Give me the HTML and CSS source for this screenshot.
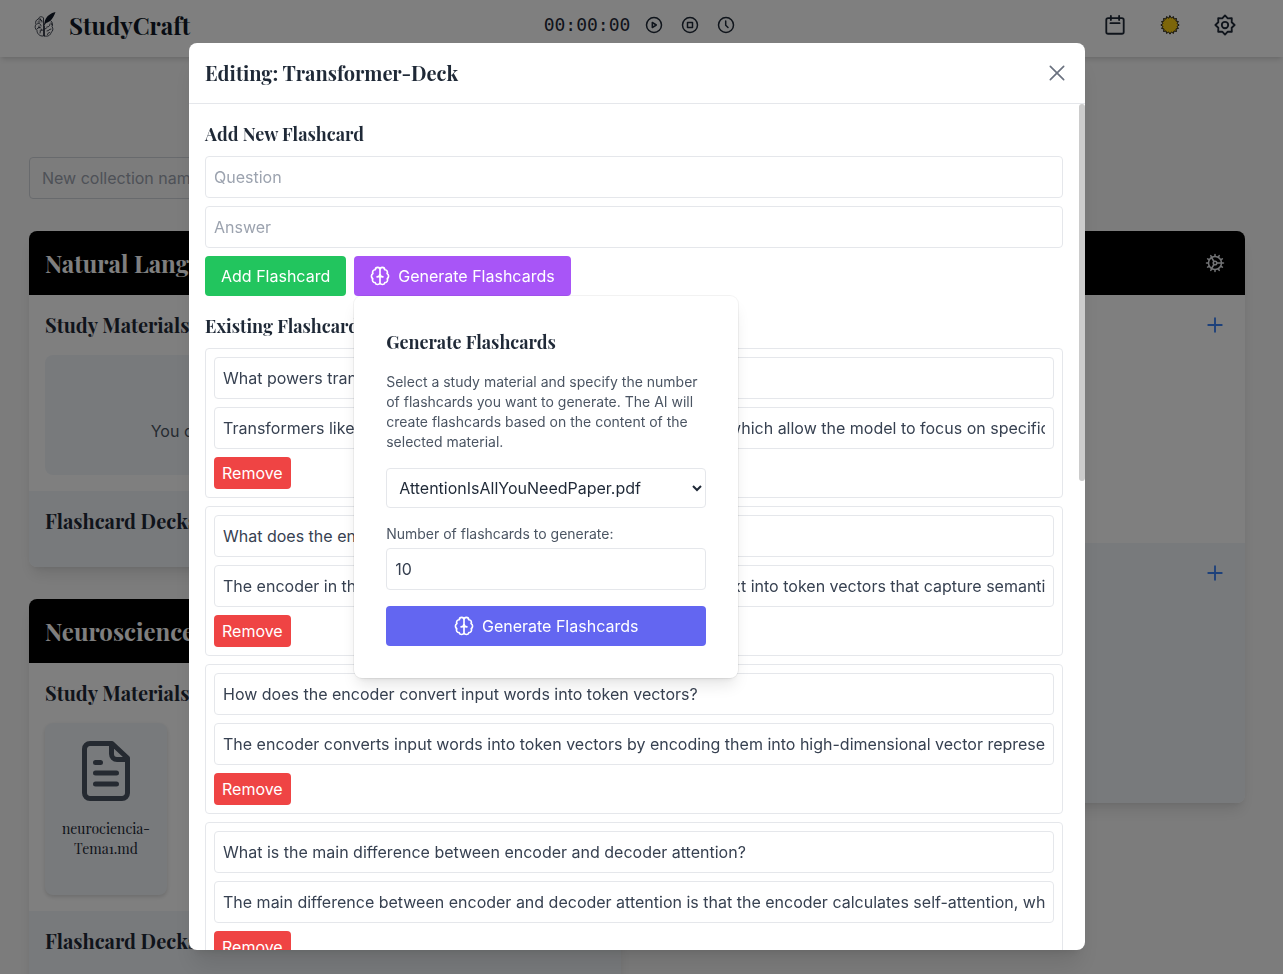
FILE: index.html
```
<!DOCTYPE html>
<html lang="en">
<head>
<meta charset="utf-8">
<title>StudyCraft</title>
<link rel="stylesheet" href="styles.css">
</head>
<body>
<svg class="sprite" aria-hidden="true">
  <symbol id="plus" viewBox="0 0 24 24"><path d="M12 3v18M3 12h18"/></symbol>
  <symbol id="brain" viewBox="0 0 24 24"><path d="M12 4.500A2.800 2.800 0 0 0 6.400 4.500 3 3 0 0 0 3.500 9a3.800 3.800 0 0 0-.2 6.300 3.200 3.200 0 0 0 2.900 4.700A3 3 0 0 0 12 20zM12 4.500A2.800 2.800 0 0 1 17.600 4.500 3 3 0 0 1 20.500 9a3.800 3.800 0 0 1 .2 6.300 3.200 3.200 0 0 1-2.900 4.700A3 3 0 0 1 12 20zM8.500 13a3.800 3.800 0 0 0 3.500-3.800 3.800 3.800 0 0 0 3.500 3.800"/></symbol>
</svg>

<div class="page">
  <header class="topbar">
    <a class="brand" href="#">
      <svg class="brand-logo" viewBox="0 0 22 26" aria-hidden="true">
        <g fill="none" stroke="currentColor" stroke-width=".8" stroke-linecap="round">
          <path d="M9 5.500C7.500 4 5 4.500 4.500 7 2 7.500 1 10 2 12.500 .500 14 1 17 3 18.500 3 21.500 5.500 24.500 9.500 24V6"/>
          <path d="M10.500 24c3 .800 6-.500 6.500-3.500 2-1 2.500-4 1-6 1-2 .500-4-1-5.500"/>
          <path d="M10.500 14v10M5 8c2-1 3 0 3 2M3 12c2-1.500 4 0 4 2M3 17c1-2 3-2 4-1M6 21c0-2 1-3 3-3M13 15c2 0 3-1 3-3M13 19c2 0 2-2 4-2M13.500 22.500c0-1 1-2 2-2M6 6.500l1 2M5 14v2M17 11l1 2M4 10h2M6 18.500l1.500-1M11 17l1.500-1"/>
        </g>
        <path fill="currentColor" d="M21.500 0C17 1 12.500 4 11 8.500L9.500 14.500 12 11c4-1 7-4 9.500-11z"/>
      </svg>
      <span>StudyCraft</span>
    </a>
    <div class="timer">
      <span class="timer-value">00:00:00</span>
      <button class="icon-btn" type="button" aria-label="Start"><svg class="icon icon-timer" viewBox="0 0 18 18"><circle cx="9" cy="9" r="7.500"/><path d="M7.300 6.500v5L11.300 9z"/></svg></button>
      <button class="icon-btn" type="button" aria-label="Stop"><svg class="icon icon-timer" viewBox="0 0 18 18"><circle cx="9" cy="9" r="7.500"/><rect x="6.500" y="6.500" width="5" height="5"/></svg></button>
      <button class="icon-btn" type="button" aria-label="History"><svg class="icon icon-timer" viewBox="0 0 18 18"><circle cx="9" cy="9" r="7.500"/><path d="M8.700 5v4.300l2.300 2.200"/></svg></button>
    </div>
    <nav class="tools">
      <button class="icon-btn" type="button" aria-label="Calendar"><svg class="icon icon-tool" viewBox="0 0 24 24"><rect x="2.500" y="4.500" width="19" height="17" rx="2"/><path d="M7.500 2v4.500M16.500 2v4.500M7 10h10"/></svg></button>
      <button class="icon-btn" type="button" aria-label="Theme"><svg class="icon icon-tool icon-sun" viewBox="0 0 24 24"><path d="M12 2L13.500 4.400 15.800 2.800 16.300 5.500 19.100 4.900 18.500 7.700 21.200 8.200 19.700 10.500 22 12 19.700 13.500 21.200 15.800 18.500 16.300 19.100 19.100 16.300 18.500 15.800 21.200 13.500 19.600 12 22 10.500 19.600 8.200 21.200 7.700 18.500 4.900 19.100 5.500 16.300 2.800 15.800 4.300 13.500 2 12 4.300 10.500 2.800 8.200 5.500 7.700 4.900 4.900 7.700 5.500 8.200 2.800 10.500 4.400z"/></svg></button>
      <button class="icon-btn" type="button" aria-label="Settings"><svg class="icon icon-tool" viewBox="0 0 24 24"><path d="M12 1.500l3 3.200 4.400-.1-.1 4.400 3.200 3-3.200 3 .1 4.400-4.400-.1-3 3.200-3-3.200-4.400.1.1-4.400L1.500 12l3.200-3-.1-4.400 4.400.1z"/><circle cx="12" cy="12" r="3.500"/></svg></button>
    </nav>
  </header>

  <main class="content">
    <input class="collection-input" type="text" placeholder="New collection name" aria-label="New collection name">
    <div class="columns">
      <div class="column">
        <section class="collection">
          <div class="collection-head"><h2>Natural Language</h2></div>
          <div class="panel">
            <h3>Study Materials</h3>
            <div class="empty"><p>You can upload new materials with the button.</p></div>
          </div>
          <div class="panel panel-decks"><h3>Flashcard Decks</h3></div>
        </section>
        <section class="collection">
          <div class="collection-head"><h2>Neuroscience</h2></div>
          <div class="panel panel-files">
            <h3>Study Materials</h3>
            <div class="file">
              <svg class="file-icon" viewBox="0 0 48 60" aria-hidden="true"><path d="M30 2.500H8A5.500 5.500 0 0 0 2.500 8v44A5.500 5.500 0 0 0 8 57.500h32a5.500 5.500 0 0 0 5.500-5.500V17zM29.500 3v10a5.500 5.500 0 0 0 5.500 5.500h10M13.500 21.500h5M13.500 32h21M13.500 43h21"/></svg>
              <span>neurociencia-Tema1.md</span>
            </div>
          </div>
          <div class="panel panel-decks"><h3>Flashcard Decks</h3></div>
        </section>
      </div>
      <div class="column">
        <section class="collection">
          <div class="collection-head">
            <h2>Transformers</h2>
            <button class="icon-btn" type="button" aria-label="Collection settings"><svg class="icon icon-cog" viewBox="0 0 20 20"><circle cx="10" cy="10" r="6.500"/><circle cx="10" cy="10" r="1.800"/><path d="M12 10h4.500M9 8.500L6.500 4.500M9 11.500l-2.500 4"/><path d="M10 1.500V3M10 17v1.500M1.500 10H3M17 10h1.500M5.800 2.600l.7 1.300M13.500 16.100l.7 1.300M14.200 2.600l-.7 1.300M6.500 16.100l-.7 1.300M2.600 5.800l1.300.7M16.100 13.500l1.300.7M2.600 14.200l1.300-.7M16.100 6.500l1.300-.7"/></svg></button>
          </div>
          <div class="panel panel-tall">
            <h3>Study Materials</h3>
            <button class="icon-btn" type="button" aria-label="Add material"><svg class="icon icon-plus"><use href="#plus"/></svg></button>
          </div>
          <div class="panel panel-decks panel-taller">
            <h3>Flashcard Decks</h3>
            <button class="icon-btn" type="button" aria-label="Add deck"><svg class="icon icon-plus"><use href="#plus"/></svg></button>
          </div>
        </section>
      </div>
    </div>
  </main>
</div>

<div class="overlay">
  <div class="modal" role="dialog" aria-modal="true" aria-labelledby="modal-title">
    <div class="modal-head">
      <h2 id="modal-title">Editing: Transformer-Deck</h2>
      <button class="icon-btn" type="button" aria-label="Close"><svg class="icon icon-close" viewBox="0 0 24 24"><path d="M4 4l16 16M20 4L4 20"/></svg></button>
    </div>
    <div class="modal-body">
      <div class="modal-content">
        <h3>Add New Flashcard</h3>
        <form class="stack">
          <input class="field" type="text" placeholder="Question" aria-label="Question">
          <input class="field" type="text" placeholder="Answer" aria-label="Answer">
          <div class="actions">
            <button class="btn btn-green" type="button">Add Flashcard</button>
            <div class="dropdown">
              <button class="btn btn-purple" type="button"><svg class="icon icon-brain"><use href="#brain"/></svg>Generate Flashcards</button>
              <div class="popover">
                <h3>Generate Flashcards</h3>
                <p>Select a study material and specify the number of flashcards you want to generate. The AI will create flashcards based on the content of the selected material.</p>
                <select class="select" aria-label="Study material"><option>AttentionIsAllYouNeedPaper.pdf</option></select>
                <label for="count">Number of flashcards to generate:</label>
                <input class="field" id="count" type="text" inputmode="numeric" value="10">
                <button class="btn btn-indigo" type="button"><svg class="icon icon-brain"><use href="#brain"/></svg>Generate Flashcards</button>
              </div>
            </div>
          </div>
        </form>
        <h3 class="list-title">Existing Flashcards</h3>
        <ul class="cards">
          <li class="card">
            <input class="field" type="text" aria-label="Question 1" value="What powers transformers like ChatGPT?">
            <input class="field" type="text" aria-label="Answer 1" value="Transformers like ChatGPT are powered by attention mechanisms, which allow the model to focus on specific parts of the input.">
            <button class="btn btn-red" type="button">Remove</button>
          </li>
          <li class="card">
            <input class="field" type="text" aria-label="Question 2" value="What does the encoder do in a transformer?">
            <input class="field" type="text" aria-label="Answer 2" value="The encoder in the transformer architecture converts every input text into token vectors that capture semantic meaning.">
            <button class="btn btn-red" type="button">Remove</button>
          </li>
          <li class="card">
            <input class="field" type="text" aria-label="Question 3" value="How does the encoder convert input words into token vectors?">
            <input class="field" type="text" aria-label="Answer 3" value="The encoder converts input words into token vectors by encoding them into high-dimensional vector representations.">
            <button class="btn btn-red" type="button">Remove</button>
          </li>
          <li class="card">
            <input class="field" type="text" aria-label="Question 4" value="What is the main difference between encoder and decoder attention?">
            <input class="field" type="text" aria-label="Answer 4" value="The main difference between encoder and decoder attention is that the encoder calculates self-attention, while the decoder also attends to the encoder.">
            <button class="btn btn-red" type="button">Remove</button>
          </li>
        </ul>
      </div>
      <div class="scroll-track" aria-hidden="true"><div class="scroll-thumb"></div></div>
    </div>
  </div>
</div>
</body>
</html>
```

FILE: styles.css
```
* { box-sizing: border-box; }

:root {
  --serif: "Playfair Display", "Liberation Serif", serif;
  --sans: Inter, "Liberation Sans", sans-serif;
  --ink: #1f2937;
  --text: #374151;
  --muted: #4b5563;
  --line: #e5e7eb;
}

body {
  margin: 0;
  height: 100vh;
  overflow: hidden;
  background: #f9f9f9;
  color: var(--ink);
  font: 400 16px/24px var(--sans);
}

h2, h3, p, ul { margin: 0; padding: 0; }
h2, h3 { font-family: var(--serif); font-weight: 700; }
button, input, select { font: inherit; color: inherit; }
button { cursor: pointer; }

.sprite { position: absolute; width: 0; height: 0; }

.icon {
  display: block;
  fill: none;
  stroke: currentColor;
  stroke-width: 2;
  stroke-linecap: round;
  stroke-linejoin: round;
}
.icon-btn {
  display: flex;
  align-items: center;
  justify-content: center;
  padding: 0;
  border: 0;
  background: none;
}

/* Page behind the dialog */
.page { height: 100vh; overflow: hidden; }

.topbar {
  display: grid;
  grid-template-columns: 1fr auto 1fr;
  align-items: center;
  height: 57px;
  padding: 0 47px 8px 34px;
  background: #fff;
  box-shadow: 0 4px 6px -1px rgba(0, 0, 0, .1), 0 2px 4px -2px rgba(0, 0, 0, .1);
}
.brand {
  display: flex;
  align-items: center;
  gap: 13px;
  color: #111827;
  font: 700 24px/32px var(--serif);
  text-decoration: none;
}
.brand-logo { width: 22px; height: 26px; }
.timer { display: flex; align-items: center; gap: 18px; margin-left: 9px; }
.timer-value { margin-right: -3px; font: 400 18px/28px "DejaVu Sans Mono", monospace; }
.icon-timer { width: 18px; height: 18px; stroke-width: 1.5; }
.tools { display: flex; justify-content: flex-end; gap: 33px; }
.icon-tool { width: 22px; height: 22px; }
.icon-sun { fill: #facc15; stroke: #111; stroke-width: 1; }

.content { padding: 100px 38px 0 29px; }
.collection-input {
  display: block;
  width: 320px;
  height: 42px;
  padding: 8px 12px;
  border: 1px solid #d1d5db;
  border-radius: 4px;
  background: transparent;
}
.collection-input::placeholder { color: #9ca3af; }

.columns { display: grid; grid-template-columns: 1fr 1fr; gap: 32px; margin-top: 32px; }
.column { display: flex; flex-direction: column; gap: 32px; }
.collection {
  overflow: hidden;
  border-radius: 8px;
  background: #fff;
  box-shadow: 0 10px 15px -3px rgba(0, 0, 0, .1), 0 4px 6px -4px rgba(0, 0, 0, .1);
}
.collection-head {
  display: flex;
  align-items: center;
  justify-content: space-between;
  height: 64px;
  padding: 0 16px;
  background: #000;
  color: #fff;
}
.collection-head h2 { font-size: 24px; line-height: 32px; }
.panel {
  display: flex;
  flex-wrap: wrap;
  align-content: flex-start;
  justify-content: space-between;
  gap: 16px;
  padding: 16px;
}
.panel h3 { font-size: 20px; line-height: 28px; }
.panel-files { flex-direction: column; }
.panel-decks { padding-bottom: 32px; background: #f1f5f9; }
.panel-tall { min-height: 248px; }
.panel-taller { min-height: 260px; }
.panel .icon-btn, .collection-head .icon-btn { width: 28px; height: 28px; }
.icon-cog { width: 20px; height: 20px; stroke-width: 1.5; stroke: #e5e7eb; }
.icon-plus { width: 18px; height: 18px; stroke-width: 2.500; color: #3b82f6; }
.empty {
  display: flex;
  align-items: flex-end;
  justify-content: center;
  width: 100%;
  height: 120px;
  padding-bottom: 32px;
  border-radius: 8px;
  background: #f1f5f9;
  color: var(--muted);
}
.file {
  display: flex;
  flex-direction: column;
  align-items: center;
  gap: 18px;
  width: 122px;
  height: 172px;
  padding: 18px 8px;
  border-radius: 8px;
  background: #f1f5f9;
  box-shadow: 0 2px 4px rgba(0, 0, 0, .15);
  font: 400 14px/20px var(--serif);
  text-align: center;
}
.file-icon {
  width: 48px;
  height: 60px;
  fill: none;
  stroke: #4b5563;
  stroke-width: 5;
  stroke-linecap: round;
  stroke-linejoin: round;
}

/* Dialog */
.overlay {
  position: fixed;
  inset: 0;
  display: flex;
  justify-content: center;
  padding: 43px 9px 24px 0;
  background: rgba(0, 0, 0, .5);
}
.modal {
  display: flex;
  flex-direction: column;
  width: 100%;
  max-width: 896px;
  overflow: hidden;
  border-radius: 8px;
  background: #fff;
  box-shadow: 0 20px 25px -5px rgba(0, 0, 0, .1), 0 8px 10px -6px rgba(0, 0, 0, .1);
}
.modal-head {
  display: flex;
  align-items: center;
  justify-content: space-between;
  padding: 16px;
  border-bottom: 1px solid var(--line);
}
.modal-head h2 { font-size: 20px; line-height: 28px; }
.modal-head .icon-btn { width: 24px; height: 28px; }
.icon-close { width: 20px; height: 20px; color: #6b7280; }
.modal-body { display: flex; flex: 1; min-height: 0; }
.modal-content {
  flex: 1;
  min-width: 0;
  overflow-y: auto;
  padding: 16px;
  scrollbar-width: none;
}
.modal-content h3 { font-size: 18px; line-height: 28px; }
.scroll-track { width: 6px; }
.scroll-thumb { height: 377px; border-radius: 3px; background: #ccc; }
.stack { display: flex; flex-direction: column; gap: 8px; margin-top: 8px; }
.field {
  display: block;
  width: 100%;
  height: 42px;
  padding: 8px;
  border: 1px solid var(--line);
  border-radius: 4px;
  background: #fff;
  color: var(--text);
}
.field::placeholder { color: #9ca3af; }
.actions { display: flex; gap: 8px; }
.btn {
  display: flex;
  align-items: center;
  justify-content: center;
  gap: 8px;
  height: 40px;
  padding: 0 16px;
  border: 0;
  border-radius: 4px;
  color: #fff;
}
.btn-green { background: #22c55e; }
.btn-purple { background: #a855f7; }
.btn-indigo { width: 100%; margin-top: 16px; background: #6366f1; }
.btn-red { width: max-content; height: 32px; padding: 0 8px; background: #ef4444; }
.icon-brain { width: 20px; height: 20px; }
.dropdown { position: relative; }
.popover {
  position: absolute;
  top: 100%;
  left: 0;
  z-index: 2;
  width: 384px;
  padding: 32px;
  border-radius: 8px;
  background: #fff;
  box-shadow: 0 0 0 1px rgba(0, 0, 0, .05), 0 10px 15px -3px rgba(0, 0, 0, .1), 0 4px 6px -4px rgba(0, 0, 0, .1);
}
.popover p, .popover label { display: block; color: var(--muted); font-size: 14px; line-height: 20px; }
.popover p { margin: 16px 0; }
.popover label { margin: 16px 0 4px; }
.select {
  display: block;
  width: 100%;
  height: 40px;
  padding: 0 0 0 8px;
  border: 1px solid var(--line);
  border-radius: 4px;
  background: #fff;
}
.list-title { margin-top: 16px; }
.cards {
  display: flex;
  flex-direction: column;
  gap: 8px;
  margin-top: 8px;
  list-style: none;
}
.card {
  display: flex;
  flex-direction: column;
  gap: 8px;
  padding: 8px;
  border: 1px solid var(--line);
  border-radius: 4px;
}
```
